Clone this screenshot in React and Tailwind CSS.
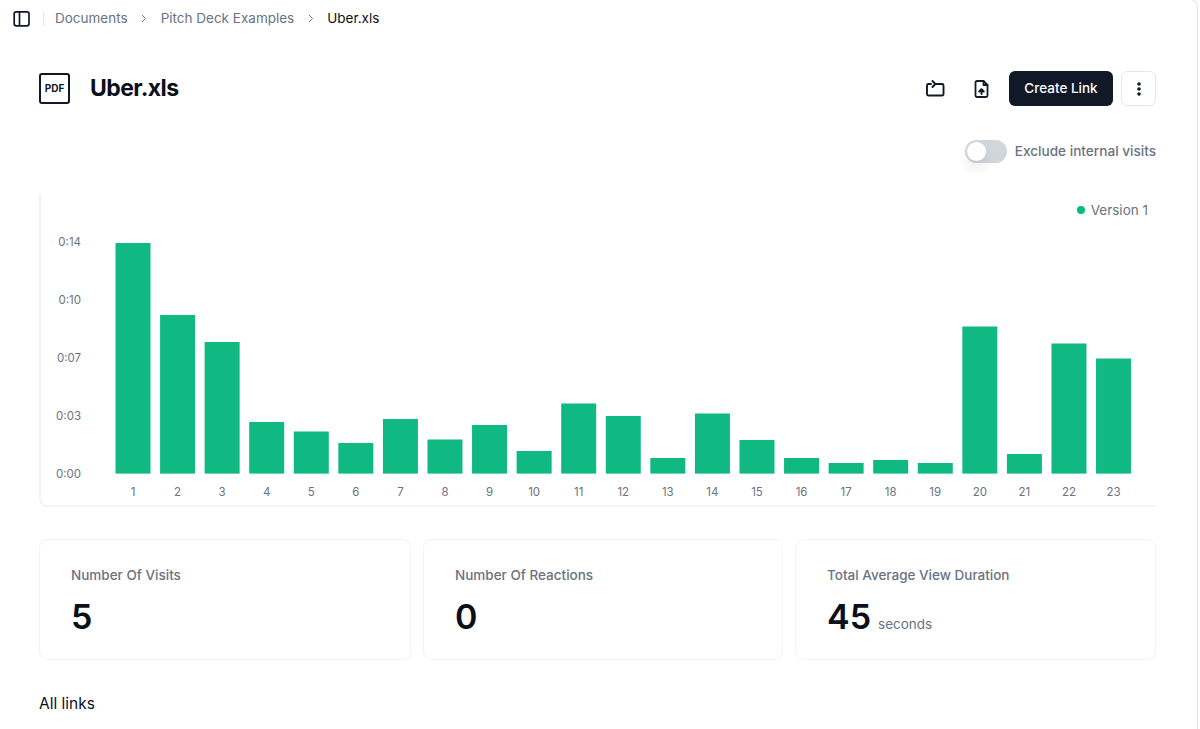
const tops = [243,315,342,422,431.5,443,419,439.5,425,451,403.5,416,458,413.5,440,458,463,460,463,326.5,454,343.5,358.5];
const yLabels = [["0:14",241],["0:10",299],["0:07",357],["0:03",415],["0:00",473]];

function Chart() {
  const oy = 194, ox = 41;
  return (
    <svg width="1115" height="311" viewBox="0 0 1115 311" className="block">
      {yLabels.map(([t, y]) => (
        <text key={t} x={40} y={y - oy + 4.5} textAnchor="end" fontSize="11.5" fill="#6b7280">{t}</text>
      ))}
      {tops.map((top, i) => {
        const x = 115.5 + i * 44.57 - ox;
        return (
          <g key={i}>
            <rect x={x} y={top - oy} width={35} height={473.6 - top} fill="#10b981" />
            <text x={x + 17.5} y={491 - oy + 4.5} textAnchor="middle" fontSize="11.5" fill="#6b7280">{i + 1}</text>
          </g>
        );
      })}
    </svg>
  );
}

function Stat({ label, value, unit }) {
  return (
    <div className="h-[121px] rounded-lg border border-gray-100 pl-[31px] pt-[25px]">
      <div className="text-[13.5px] font-medium leading-5 text-gray-500">{label}</div>
      <div className="mt-[12px] flex items-baseline gap-[7px]">
        <span className="text-[34px] font-semibold leading-10 text-[#0b0f1a]">{value}</span>
        {unit && <span className="text-[13.5px] text-gray-500">{unit}</span>}
      </div>
    </div>
  );
}

function Chevron() {
  return (
    <span className="mx-3 flex w-[9px] justify-center">
      <svg width="6" height="9" viewBox="0 0 6 9" fill="none" stroke="#6b7280" strokeWidth="1"><path d="M1 1l3.5 3.5L1 8" /></svg>
    </span>
  );
}

export default function App() {
  return (
    <div className="h-[729px] w-full overflow-hidden bg-white font-['Inter',sans-serif]">
      <div className="-mt-px h-[730px] w-[1198px] rounded-tr-lg border-r border-t border-gray-200">
        <header className="flex h-[36px] items-center pl-[13px] pt-px">
          <svg width="18" height="18" viewBox="0 0 18 18" fill="none" stroke="#111827" strokeWidth="1.7" className="shrink-0">
            <rect x="1.2" y="1.8" width="14.8" height="14" rx="2" />
            <path d="M6.5 1.8v14" />
          </svg>
          <div className="ml-[12px] h-3.5 w-px bg-gray-200" />
          <nav className="ml-[11px] flex items-center text-[13.5px] text-gray-500">
            <span>Documents</span>
            <Chevron />
            <span>Pitch Deck Examples</span>
            <Chevron />
            <span className="text-[#0b0f1a]">Uber.xls</span>
          </nav>
        </header>

        <main className="pl-[39px] pr-[41px]">
          <section className="mt-[35px] flex h-[35px] items-center justify-between">
            <div className="flex items-center">
              <div className="flex h-[31px] w-[31px] items-center justify-center rounded-[3px] border-2 border-[#111827] text-[10px] font-bold text-[#111827]">PDF</div>
              <h1 className="ml-5 text-[23px] font-bold tracking-[-0.025em] text-[#0b0f1a]">Uber.xls</h1>
            </div>
            <div className="flex items-center">
              <svg width="20" height="18" viewBox="0 0 20 18" fill="none" stroke="#111827" strokeWidth="1.9" strokeLinecap="round" strokeLinejoin="round">
                <path d="M10 4h7a1.5 1.5 0 0 1 1.5 1.5v8.5a1.5 1.5 0 0 1-1.5 1.5H3.500A1.5 1.5 0 0 1 2 14V5.500A1.5 1.5 0 0 1 3.500 4H6" />
                <path d="M7.500 1l2.800 3-2.800 3" />
              </svg>
              <svg className="ml-[29px]" width="16" height="18" viewBox="0 0 16 18" fill="none" stroke="#111827" strokeWidth="1.8" strokeLinecap="round" strokeLinejoin="round">
                <path d="M9.500 1H3a1.500 1.500 0 0 0-1.500 1.500v13A1.500 1.500 0 0 0 3 17h9a1.500 1.500 0 0 0 1.500-1.500V5z" />
                <path d="M9.500 1v4h4" />
                <path d="M7.500 14V9.500M5.300 11.500l2.200-2.200 2.200 2.200" strokeWidth="2" />
              </svg>
              <button className="ml-[19px] h-[35px] w-[104px] rounded-md bg-[#111827] text-[13.5px] font-medium text-white">Create Link</button>
              <button className="ml-2 flex h-[35px] w-[35px] items-center justify-center rounded-md border border-gray-200">
                <svg width="4" height="14" viewBox="0 0 4 14" fill="#111827"><circle cx="2" cy="2" r="1.8" /><circle cx="2" cy="7" r="1.8" /><circle cx="2" cy="12" r="1.8" /></svg>
              </button>
            </div>
          </section>

          <section className="mt-[33px] flex h-6 items-center justify-end">
            <div className="relative h-[23px] w-[42px] rounded-full bg-gray-300">
              <div className="absolute left-0.5 top-0.5 h-[19px] w-[19px] rounded-full bg-white shadow-[0_8px_12px_rgba(0,0,0,0.08)]" />
            </div>
            <span className="ml-2 text-[13.6px] font-medium text-gray-500">Exclude internal visits</span>
          </section>

          <section className="relative mt-[31px] h-[313px] rounded-bl-lg border-b-2 border-l-2 border-gray-100">
            <div className="absolute right-2 top-[6px] flex items-center text-[13.5px] text-gray-500">
              <span className="mr-[6px] h-2 w-2 rounded-full bg-emerald-500" />
              Version 1
            </div>
            <Chart />
          </section>

          <section className="mt-8 grid grid-cols-[372px_360px_1fr] gap-3">
            <Stat label="Number Of Visits" value="5" />
            <Stat label="Number Of Reactions" value="0" />
            <Stat label="Total Average View Duration" value="45" unit="seconds" />
          </section>

          <h2 className="mt-8 text-[15.5px] leading-6 text-[#0b0f1a]">All links</h2>
        </main>
      </div>
    </div>
  );
}
